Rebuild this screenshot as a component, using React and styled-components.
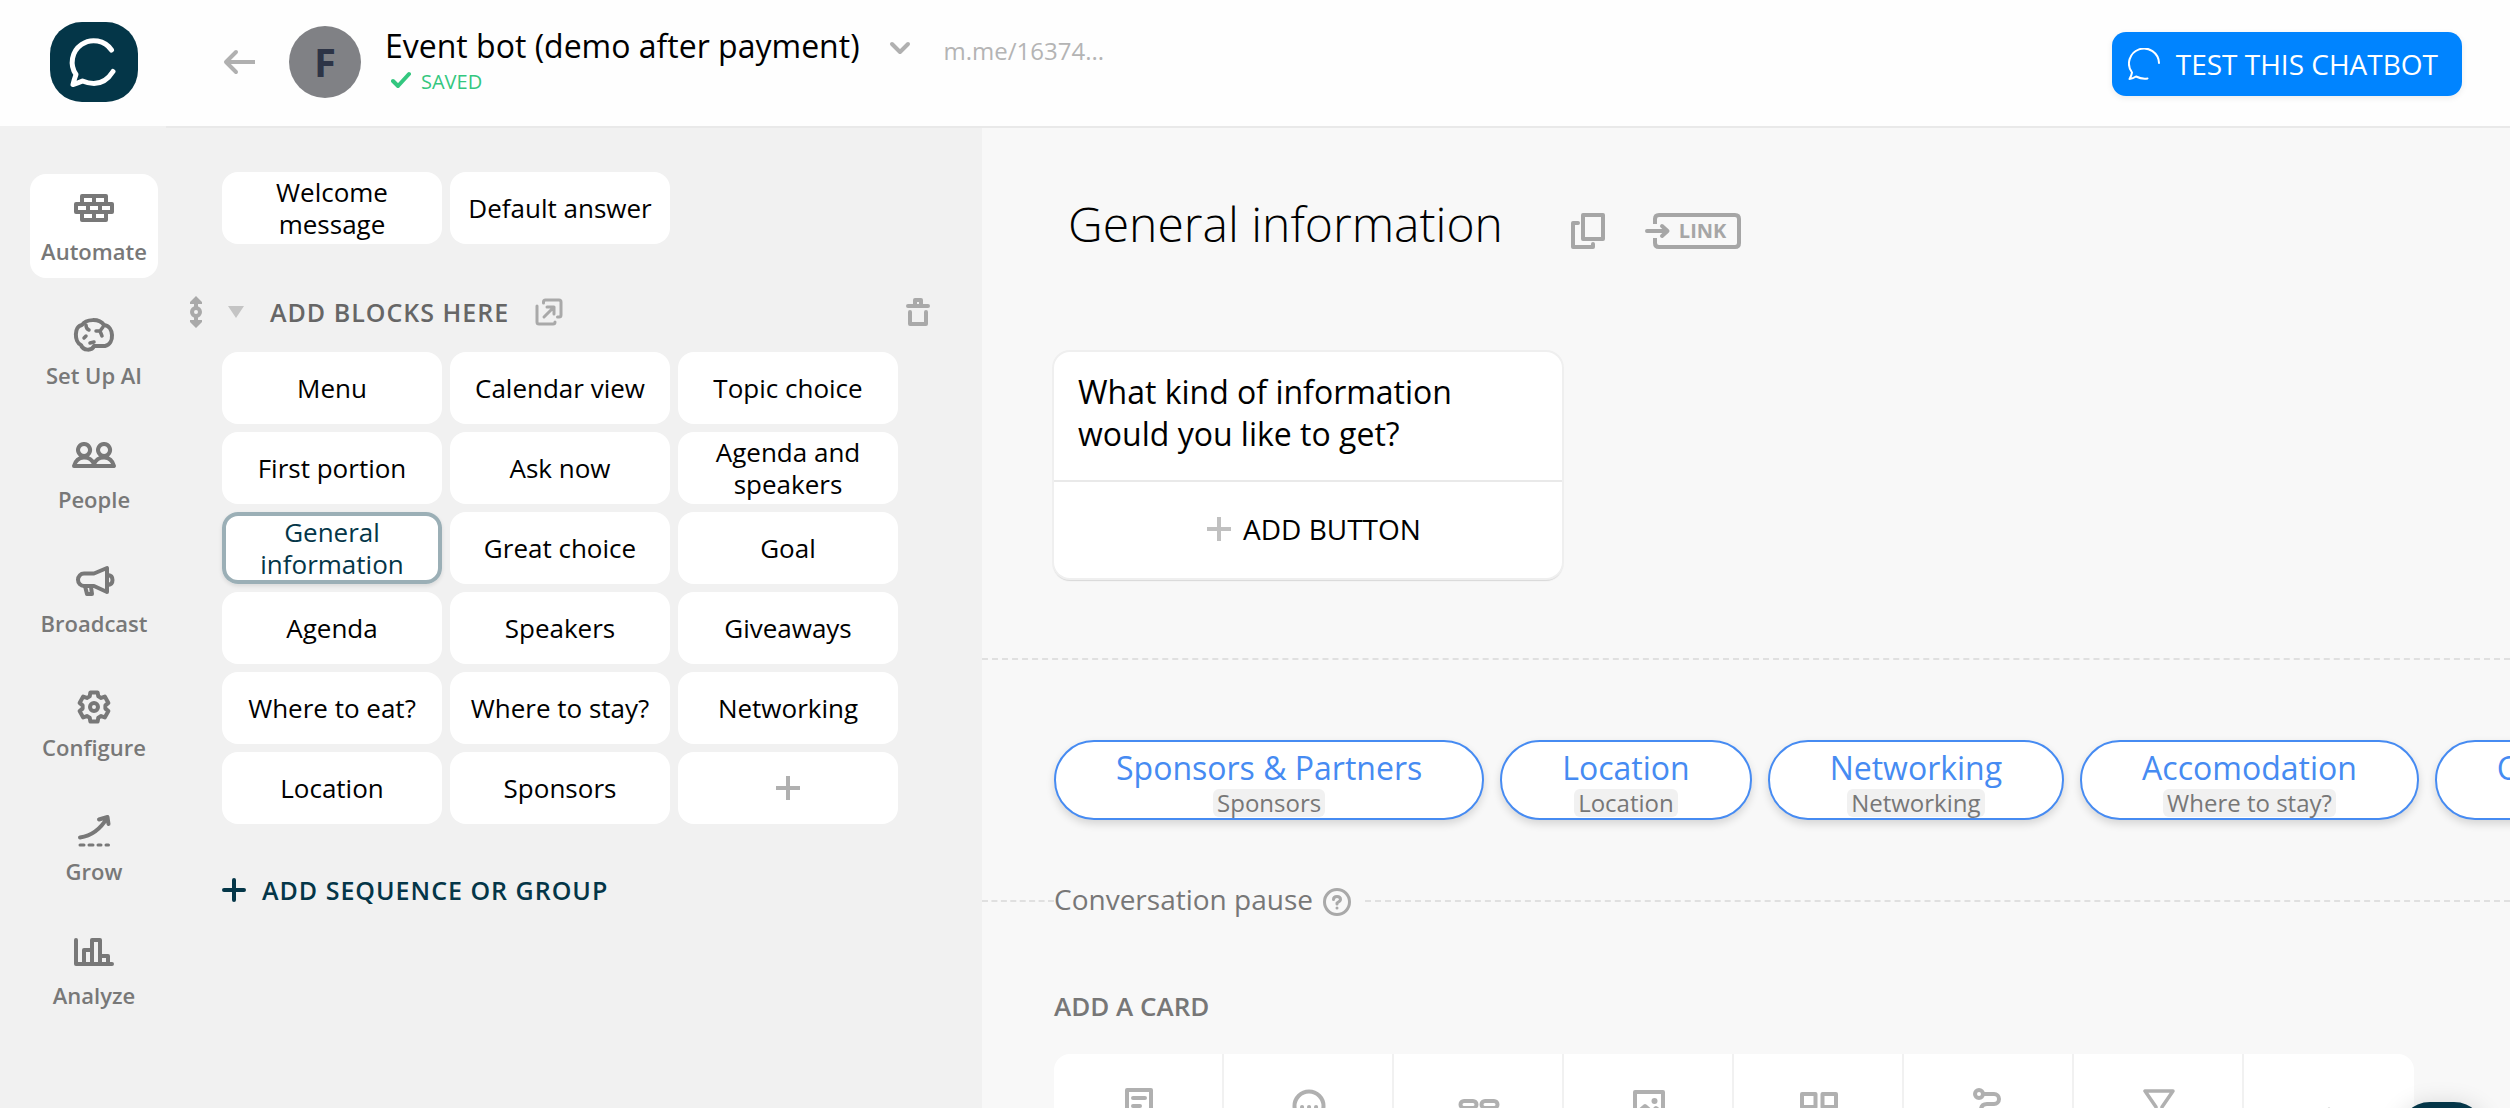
import React from "react";
import styled, { createGlobalStyle, css } from "styled-components";

const GlobalStyle = createGlobalStyle`
  *, *::before, *::after { box-sizing: border-box; }
  body { margin: 0; background: #f8f8f8; }
  body, button { font-family: "Open Sans", "Noto Sans", sans-serif; }
  button { border: 0; padding: 0; background: none; color: inherit; cursor: pointer; }
  h1, h2, p, ul { margin: 0; padding: 0; font-weight: 400; }
  ul { list-style: none; }
  svg { display: block; flex: none; }
`;

/* ---------- shell ---------- */

const Shell = styled.div`
  display: flex;
  height: 100vh;
  overflow: hidden;
`;

const Sidebar = styled.aside`
  flex: 0 0 166px;
  background: #f1f1f1;
`;

const LogoBar = styled.div`
  height: 126px;
  padding: 22px 0 0 50px;
  background: #fefefe;
`;

const LogoTile = styled.a`
  display: block;
  width: 88px;
  height: 80px;
  border-radius: 32px;
  background: #043648;
`;

const Nav = styled.nav`
  display: flex;
  flex-direction: column;
  gap: 20px;
  padding: 48px 8px 0 30px;
`;

const NavItem = styled.button`
  display: flex;
  flex-direction: column;
  align-items: center;
  gap: 3px;
  height: 104px;
  padding-top: 12px;
  border-radius: 16px;
  background: ${(p) => (p.$active ? "#fff" : "transparent")};
  color: #787878;
  font-size: 22px;
  line-height: 28px;
  font-weight: 600;
  white-space: nowrap;
`;

const Workspace = styled.div`
  flex: 1;
  min-width: 0;
  display: flex;
  flex-direction: column;
`;

/* ---------- header ---------- */

const Header = styled.header`
  display: flex;
  align-items: flex-start;
  flex: 0 0 128px;
  padding: 26px 48px 0 57px;
  background: #fefefe;
  border-bottom: 2px solid #e9e9e9;
`;

const BackButton = styled.button`
  display: flex;
  align-items: center;
  height: 72px;
  margin-right: 32px;
`;

const Avatar = styled.div`
  width: 72px;
  height: 72px;
  margin-right: 24px;
  border-radius: 50%;
  background: #808185;
  color: #2d3446;
  font-size: 40px;
  line-height: 72px;
  font-weight: 700;
  text-align: center;
`;

const BotName = styled.h1`
  font-size: 32px;
  line-height: 40px;
  color: #000;
`;

const SavedState = styled.p`
  display: flex;
  align-items: center;
  gap: 10px;
  padding-left: 6px;
  font-size: 20px;
  line-height: 32px;
  color: #33c77f;
`;

const BotMenuButton = styled.button`
  display: flex;
  align-items: center;
  height: 44px;
  margin: 0 33px 0 29px;
`;

const BotLink = styled.a`
  font-size: 24px;
  line-height: 50px;
  color: #b4b4b4;
  text-decoration: none;
`;

const TestButton = styled.button`
  display: flex;
  align-items: center;
  gap: 16px;
  height: 64px;
  margin: 6px 0 0 auto;
  padding: 0 24px 0 16px;
  border-radius: 14px;
  background: #0084ff;
  box-shadow: 0 2px 6px rgba(0, 0, 0, 0.08);
  color: #fff;
  font-size: 28px;
  line-height: 40px;
`;

/* ---------- blocks panel ---------- */

const Body = styled.div`
  flex: 1;
  min-height: 0;
  display: flex;
`;

const BlocksPanel = styled.section`
  flex: 0 0 816px;
  padding: 44px 52px 0 24px;
  background: #f1f1f1;
`;

const BlockGrid = styled.div`
  display: grid;
  grid-template-columns: repeat(3, 220px);
  gap: 8px;
  margin-left: 32px;
`;

const Block = styled.button`
  display: flex;
  align-items: center;
  justify-content: center;
  height: 72px;
  padding: 0 12px;
  border-radius: 16px;
  background: #fff;
  color: #000;
  font-size: 26px;
  line-height: 32px;
  text-align: center;
  ${(p) =>
    p.$selected &&
    css`
      color: #043648;
      box-shadow: inset 0 0 0 4px #9bafb6, 0 2px 4px rgba(0, 0, 0, 0.1);
    `}
`;

const GroupHeader = styled.div`
  display: flex;
  align-items: center;
  gap: 26px;
  height: 48px;
  margin: 44px 0 16px;
`;

const GroupName = styled.h2`
  font-size: 25px;
  line-height: 48px;
  font-weight: 600;
  letter-spacing: 1px;
  color: #666;
`;

const DeleteButton = styled.button`
  margin-left: auto;
`;

const AddGroupButton = styled.button`
  display: flex;
  align-items: center;
  gap: 16px;
  height: 48px;
  margin: 42px 0 0 32px;
  color: #043648;
  font-size: 25px;
  font-weight: 600;
  letter-spacing: 1px;
`;

/* ---------- editor ---------- */

const Editor = styled.main`
  flex: 1;
  min-width: 0;
  overflow: hidden;
  background: #f8f8f8;
`;

const BlockContent = styled.section`
  padding: 64px 72px 80px;
  border-bottom: 2px dashed #e0e0e0;
`;

const TitleRow = styled.div`
  display: flex;
  align-items: flex-end;
  gap: 40px;
  height: 64px;
  margin-bottom: 96px;
  padding-left: 14px;
`;

const BlockTitle = styled.h2`
  margin-right: 28px;
  font-size: 48px;
  line-height: 64px;
  font-weight: 300;
  color: #000;
`;

const TitleAction = styled.button`
  display: grid;
  align-items: center;
  height: 36px;
  margin-bottom: 7px;
  color: #a6a6a6;
  > * { grid-area: 1 / 1; }
`;

const LinkLabel = styled.span`
  padding-left: 34px;
  font-size: 20px;
  line-height: 36px;
  font-weight: 700;
  text-align: left;
`;

const MessageCard = styled.article`
  width: 508px;
  border-radius: 16px;
  background: #fff;
  box-shadow: 0 0 0 2px #efefef, 0 2px 1px 1px #d8d8d8;
`;

const MessageText = styled.p`
  padding: 19px 24px 25px;
  font-size: 32px;
  line-height: 42px;
  color: #000;
`;

const AddButton = styled.button`
  display: flex;
  align-items: center;
  justify-content: center;
  gap: 12px;
  width: 100%;
  height: 98px;
  padding: 0 0 2px 12px;
  border-top: 2px solid #e9e9e9;
  font-size: 28px;
  color: #000;
`;

const QuickReplies = styled.ul`
  display: flex;
  gap: 16px;
  padding: 80px 0 59px 72px;
`;

const QuickReply = styled.button`
  display: flex;
  flex-direction: column;
  align-items: center;
  height: 80px;
  padding: 5px 60px 0;
  border: 2px solid #468bf2;
  border-radius: 40px;
  background: #fff;
  box-shadow: 0 4px 8px rgba(0, 0, 0, 0.14);
  color: #468bf2;
  font-size: 32px;
  line-height: 42px;
  white-space: nowrap;
`;

const ReplyTarget = styled.span`
  padding: 0 4px;
  border-radius: 6px;
  background: #f1f1f1;
  color: #777;
  font-size: 24px;
  line-height: 28px;
`;

const PauseRow = styled.div`
  display: flex;
  align-items: center;
  &::before, &::after {
    content: "";
    border-top: 2px dashed #e0e0e0;
  }
  &::before { flex: 0 0 72px; }
  &::after { flex: 1; }
`;

const PauseLabel = styled.p`
  display: flex;
  align-items: flex-end;
  gap: 10px;
  padding: 0 14px 4px 0;
  font-size: 28px;
  line-height: 40px;
  color: #777;
`;

const HelpButton = styled.button`
  padding-bottom: 3px;
`;

const AddCard = styled.section`
  padding: 65px 0 0 72px;
`;

const AddCardTitle = styled.h2`
  margin-bottom: 30px;
  font-size: 26px;
  line-height: 36px;
  font-weight: 600;
  color: #777;
`;

const CardTypes = styled.div`
  display: grid;
  grid-template-columns: repeat(8, 170px);
  width: max-content;
  border-radius: 16px;
  background: #fff;
`;

const CardType = styled.button`
  display: flex;
  justify-content: center;
  height: 170px;
  padding: 28px 0 0 2px;
  border-right: 2px solid #f1f1f1;
  &:last-child { border-right-color: transparent; }
`;

const ChatLauncher = styled.button`
  position: fixed;
  right: 24px;
  bottom: -74px;
  width: 88px;
  height: 80px;
  border-radius: 32px;
  background: #043648;
  box-shadow: 0 2px 24px rgba(0, 0, 0, 0.14);
`;

/* ---------- icons ---------- */

function Icon({ w = 48, h = 48, stroke = "currentColor", weight = 4, children }) {
  return (
    <svg
      width={w}
      height={h}
      viewBox={`0 0 ${w} ${h}`}
      fill="none"
      stroke={stroke}
      strokeWidth={weight}
      strokeLinecap="round"
      strokeLinejoin="round"
      aria-hidden="true"
    >
      {children}
    </svg>
  );
}

const LogoMark = () => (
  <Icon w={88} h={80} stroke="#fff" weight={5}>
    <path d="M61.5 28A21.5 21.5 0 0 0 26 52.5Q24 58 23 62.5Q27 61.5 32.5 59Q52 67 63 49.5" />
  </Icon>
);

const Plus = ({ color, weight = 4, round }) => (
  <svg width="24" height="24" viewBox="0 0 24 24" stroke={color} strokeWidth={weight} strokeLinecap={round ? "round" : "butt"} aria-hidden="true">
    <path d={round ? "M12 2V22M2 12H22" : "M12 0V24M0 12H24"} />
  </svg>
);

const gearPath = (() => {
  const pts = [];
  for (let i = 0; i < 6; i++) {
    const a = -90 + i * 60;
    [[-14, 15], [14, 15], [22, 11.5], [38, 11.5]].forEach(([d, r]) => {
      const t = ((a + d) * Math.PI) / 180;
      pts.push(`${(24 + r * Math.cos(t)).toFixed(1)} ${(25 + r * Math.sin(t)).toFixed(1)}`);
    });
  }
  return `M${pts.join("L")}Z`;
})();

const navItems = [
  ["Automate", <path key="i" d="M12 10H36V18H12ZM6 18H42V26H6ZM12 26H36V34H12ZM24 10V18M18 18V26M30 18V26M24 26V34" />],
  ["Set Up AI", <g key="i"><path d="M12 15C16 9 29 8 34 15C44 16 45 34 35 36H24C22 41 13 41 11 35C4 32 4 16 12 15Z" /><path strokeWidth="3.5" d="M16 15Q16 19 19 20M33 17L30 21L26 21M30 21L32 26M14 28L16 26M24 32L20 33" /></g>],
  ["People", <path key="i" d="M14 10a6 6 0 1 0 .1 0M34 10a6 6 0 1 0 .1 0M4 32C7 21 20 21 24 30C28 21 41 21 44 32Z" />],
  ["Broadcast", <g key="i"><path d="M14 15.5H24L37 10V34L24 28H14A6 6.25 0 0 1 14 15.5Z" /><path d="M38 17Q42.5 17.5 42.5 22T38 27M15 28L17 36H22L21 29" /></g>],
  ["Configure", <g key="i"><path d={gearPath} /><circle cx="24" cy="25" r="4" /></g>],
  ["Grow", <g key="i"><path d="M10 31.5Q27 29 37 12M29 13.5L37.5 11L38.5 18" /><path strokeWidth="3" d="M10 39H14M19 39H23M28 39H31M36 39H38.5" /></g>],
  ["Analyze", <path key="i" d="M6 10V34H42M14 34V20H22M22 34V10H30V34M30 26H38V34" />],
];

const blocks = [
  "Menu", "Calendar view", "Topic choice",
  "First portion", "Ask now", "Agenda and speakers",
  "General information", "Great choice", "Goal",
  "Agenda", "Speakers", "Giveaways",
  "Where to eat?", "Where to stay?", "Networking",
  "Location", "Sponsors",
];

const replies = [
  ["Sponsors & Partners", "Sponsors"],
  ["Location", "Location"],
  ["Networking", "Networking"],
  ["Accomodation", "Where to stay?"],
  ["Conference agenda", "Agenda"],
];

const cardTypes = [
  ["Text", <path key="i" d="M12 8H36V40H12ZM18 16H30M18 24H25M18 32H30" />],
  ["Typing", <g key="i"><circle cx="24" cy="24" r="14.5" /><path d="M17 25h.1M24 25h.1M31 25h.1" /></g>],
  ["Quick reply", <path key="i" d="M9 19H18a3.5 3.5 0 0 1 0 7H9a3.5 3.5 0 0 1 0-7ZM30 19H39a3.5 3.5 0 0 1 0 7H30a3.5 3.5 0 0 1 0-7Z" />],
  ["Image", <g key="i"><path d="M10 10H38V38H10Z" /><circle cx="29.5" cy="19" r="3" fill="#b0b0b0" stroke="none" /><path d="M13 30L20 24L27 30L31 26L36 30" /></g>],
  ["Gallery", <path key="i" d="M7 12H20.5V25H7ZM27.5 12H41V25H27.5ZM7 31H20.5V40H7ZM27.5 31H41V40H27.5Z" />],
  ["Redirect", <g key="i"><circle cx="14" cy="12" r="4" /><path d="M18 12H29a5 5 0 0 1 0 10H22Q16 22 16 28V34H34" /></g>],
  ["Filter", <path key="i" strokeWidth="3.5" d="M10 9H38L27 25V38H21V25Z" />],
  ["More", <path key="i" strokeWidth="3" d="M24 27V41M17 34H31" />],
];

export default function App() {
  return (
    <Shell>
      <GlobalStyle />
      <Sidebar>
        <LogoBar>
          <LogoTile href="#" aria-label="Home"><LogoMark /></LogoTile>
        </LogoBar>
        <Nav>
          {navItems.map(([label, drawing], i) => (
            <NavItem key={label} $active={i === 0}>
              <Icon>{drawing}</Icon>
              {label}
            </NavItem>
          ))}
        </Nav>
      </Sidebar>

      <Workspace>
        <Header>
          <BackButton aria-label="Back">
            <Icon w={34} h={28} stroke="#b0b0b0"><path strokeLinecap="butt" d="M32 14H4" /><path d="M13 4L3 14L13 24" /></Icon>
          </BackButton>
          <Avatar>F</Avatar>
          <div>
            <BotName>Event bot (demo after payment)</BotName>
            <SavedState>
              <Icon w={20} h={26} weight={4}><path d="M2 12L7 17L18 5" /></Icon>
              SAVED
            </SavedState>
          </div>
          <BotMenuButton aria-label="Bot menu">
            <Icon w={22} h={16} stroke="#b0b0b0"><path d="M3 4L11 12L19 4" /></Icon>
          </BotMenuButton>
          <BotLink href="#">m.me/16374...</BotLink>
          <TestButton>
            <Icon w={32} h={32} weight={2}><path d="M31 15A15 15 0 1 0 4 24.5Q3.5 28 1.5 31Q5 30.5 8 28.5Q14 31.5 19.5 30.5" /></Icon>
            TEST THIS CHATBOT
          </TestButton>
        </Header>

        <Body>
          <BlocksPanel>
            <BlockGrid>
              <Block>Welcome message</Block>
              <Block>Default answer</Block>
            </BlockGrid>

            <GroupHeader>
              <svg width="12" height="32" viewBox="0 0 12 32" fill="none" aria-hidden="true">
                <path d="M6 0L12 6V8H0V6ZM6 32L12 26V24H0V26Z" fill="#a9a9a9" />
                <path d="M6 6V11M6 21V26" stroke="#a9a9a9" strokeWidth="4" />
                <circle cx="6" cy="16" r="4" stroke="#a9a9a9" strokeWidth="4" />
              </svg>
              <svg width="16" height="12" viewBox="0 0 16 12" aria-hidden="true"><path d="M0 0H16L8 12Z" fill="#c4c4c4" /></svg>
              <GroupName>ADD BLOCKS HERE</GroupName>
              <button aria-label="Share group">
                <Icon w={28} h={28} stroke="#a9a9a9" weight={3}>
                  <path d="M8.5 5V4Q8.5 2 10.5 2H24Q26 2 26 4V17Q26 19 24 19H22.5M2 8V24Q2 26 4 26H18Q20 26 20 24M9 19L19 9M12 9H19V16" />
                </Icon>
              </button>
              <DeleteButton aria-label="Delete group">
                <Icon w={24} h={28} stroke="#a9a9a9"><path d="M2 8H22M9 8V2H15V8M4 14V26H20V14" /></Icon>
              </DeleteButton>
            </GroupHeader>

            <BlockGrid>
              {blocks.map((name) => (
                <Block key={name} $selected={name === "General information"}>{name}</Block>
              ))}
              <Block aria-label="Add block"><Plus color="#b0b0b0" /></Block>
            </BlockGrid>

            <AddGroupButton><Plus color="#043648" round />ADD SEQUENCE OR GROUP</AddGroupButton>
          </BlocksPanel>

          <Editor>
            <BlockContent>
              <TitleRow>
                <BlockTitle>General information</BlockTitle>
                <TitleAction aria-label="Duplicate block">
                  <Icon w={34} h={36}><path d="M12 2H32V26H12ZM7 10H2V34H22V31" /></Icon>
                </TitleAction>
                <TitleAction>
                  <Icon w={96} h={36}>
                    <path strokeLinecap="butt" d="M10 11V6Q10 2 14 2H90Q94 2 94 6V30Q94 34 90 34H14Q10 34 10 30V25" />
                    <path d="M2 18H22M17 13L22.5 18L17 23" />
                  </Icon>
                  <LinkLabel>LINK</LinkLabel>
                </TitleAction>
              </TitleRow>
              <MessageCard>
                <MessageText>What kind of information would you like to get?</MessageText>
                <AddButton><Plus color="#c0c0c0" />ADD BUTTON</AddButton>
              </MessageCard>
            </BlockContent>

            <QuickReplies>
              {replies.map(([label, target]) => (
                <li key={label}>
                  <QuickReply>
                    {label}
                    <ReplyTarget>{target}</ReplyTarget>
                  </QuickReply>
                </li>
              ))}
            </QuickReplies>

            <PauseRow>
              <PauseLabel>
                Conversation pause
                <HelpButton aria-label="Help">
                  <Icon w={28} h={28} stroke="#a9a9a9" weight={3}>
                    <circle cx="14" cy="14" r="12.5" />
                    <path d="M10.5 11.5Q10.5 8.5 14 8.5T17.5 11.5Q17.5 13 14 15V16M14 20V20.1" />
                  </Icon>
                </HelpButton>
              </PauseLabel>
            </PauseRow>

            <AddCard>
              <AddCardTitle>ADD A CARD</AddCardTitle>
              <CardTypes>
                {cardTypes.map(([label, drawing]) => (
                  <CardType key={label} aria-label={label}>
                    <Icon stroke="#b0b0b0">{drawing}</Icon>
                  </CardType>
                ))}
              </CardTypes>
            </AddCard>
          </Editor>
        </Body>
      </Workspace>

      <ChatLauncher aria-label="Open chat"><LogoMark /></ChatLauncher>
    </Shell>
  );
}
